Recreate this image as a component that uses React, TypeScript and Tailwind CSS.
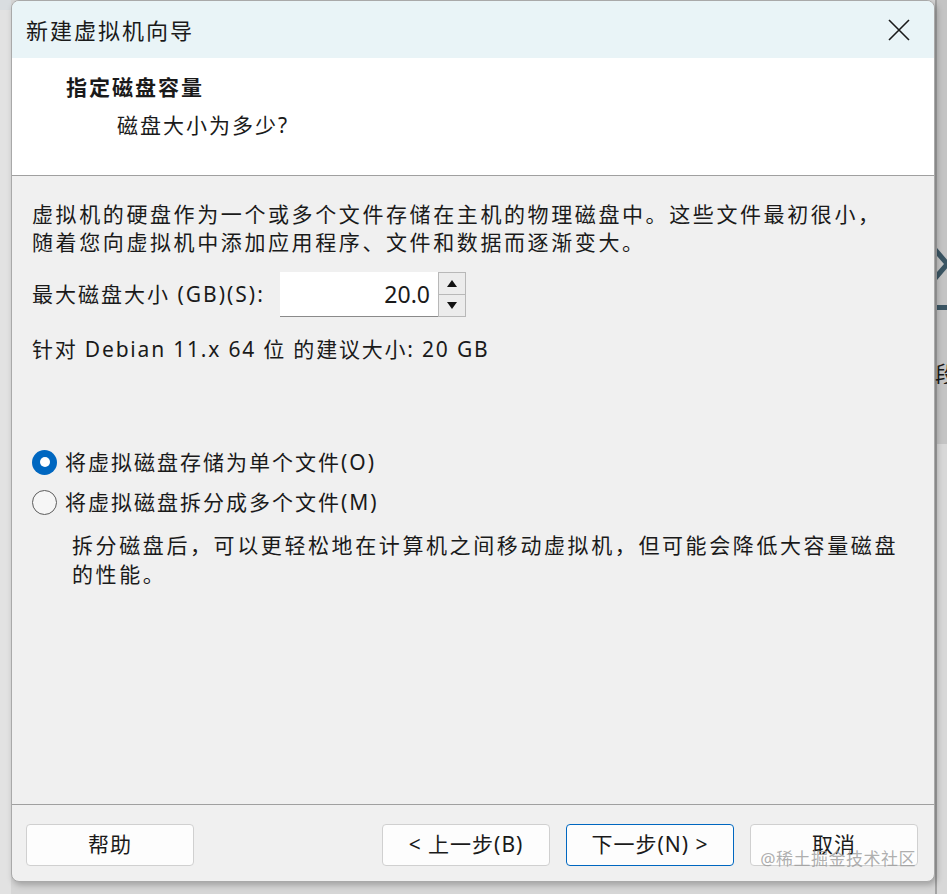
export default function App() {
  const font = { fontFamily: '"Noto Sans", "Noto Sans CJK SC", sans-serif' };
  return (
    <div className="w-[947px] h-[894px] bg-[#d6d6d6] flex overflow-hidden text-[#1a1a1a]" style={font}>
      <div className="w-[11px] shrink-0 bg-[#e2e2e2] border-t-[10px] border-[#d9dde0]" />
      <div className="w-[924px] h-[882px] shrink-0 flex flex-col rounded-[8px] overflow-hidden border border-[#a9a9a9] bg-[#f0f0f0] shadow-[2px_3px_6px_rgba(0,0,0,0.25)] relative">
        {/* title bar */}
        <div className="h-[57px] shrink-0 bg-[#e9f4f7] flex items-center justify-between pl-[14px] pr-[20px]">
          <span className="text-[22px] tracking-[2px] leading-none">新建虚拟机向导</span>
          <svg width="24" height="24" viewBox="0 0 24 24" className="mr-[3px]">
            <path d="M2 2 L22 22 M22 2 L2 22" stroke="#1a1a1a" strokeWidth="1.6" fill="none" />
          </svg>
        </div>

        {/* header */}
        <div className="h-[118px] shrink-0 bg-white border-b border-[#a0a0a0] pl-[54px] pt-[14px]">
          <div className="text-[21px] font-bold tracking-[2px] leading-[30px]">指定磁盘容量</div>
          <div className="text-[21px] tracking-[2px] leading-[30px] mt-[8px] pl-[51px]">磁盘大小为多少?</div>
        </div>

        {/* body */}
        <div className="flex-1 flex flex-col pl-[20px] pt-[24px]">
          <div className="text-[21px] tracking-[2.6px] leading-[28px]">
            <div>虚拟机的硬盘作为一个或多个文件存储在主机的物理磁盘中。这些文件最初很小，</div>
            <div>随着您向虚拟机中添加应用程序、文件和数据而逐渐变大。</div>
          </div>

          <div className="flex items-center mt-[16px] h-[45px]">
            <span className="text-[21px] tracking-[2px] w-[248px]">最大磁盘大小 (GB)(S):</span>
            <div className="w-[158px] h-[45px] bg-white border-b border-[#8a8a8a] flex items-center justify-end pr-[8px] text-[23px]">
              20.0
            </div>
            <div className="w-[28px] h-[45px] flex flex-col border border-[#b8b8b8]">
              <div className="flex-1 bg-[#ececec] border-b border-[#b8b8b8] flex items-center justify-center">
                <svg width="10" height="7" viewBox="0 0 10 7"><path d="M5 0 L10 7 L0 7 Z" fill="#111" /></svg>
              </div>
              <div className="flex-1 bg-[#ececec] flex items-center justify-center">
                <svg width="10" height="7" viewBox="0 0 10 7"><path d="M0 0 L10 0 L5 7 Z" fill="#111" /></svg>
              </div>
            </div>
          </div>

          <div className="text-[21px] tracking-[1.8px] leading-[28px] mt-[18px]">
            针对 Debian 11.x 64 位 的建议大小: 20 GB
          </div>

          <div className="flex flex-col gap-[14px] mt-[86px] text-[21px] tracking-[2px] leading-[26px]">
            <label className="flex items-center gap-[8px]">
              <span className="w-[25px] h-[25px] rounded-full bg-[#0067c0] flex items-center justify-center">
                <span className="w-[10px] h-[10px] rounded-full bg-white" />
              </span>
              <span>将虚拟磁盘存储为单个文件(O)</span>
            </label>
            <label className="flex items-center gap-[8px]">
              <span className="w-[25px] h-[25px] rounded-full border-[1.5px] border-[#5c5c5c] bg-[#f6f6f6]" />
              <span>将虚拟磁盘拆分成多个文件(M)</span>
            </label>
          </div>

          <div className="pl-[40px] mt-[16px] text-[21px] tracking-[2.6px] leading-[29px]">
            <div>拆分磁盘后，可以更轻松地在计算机之间移动虚拟机，但可能会降低大容量磁盘</div>
            <div>的性能。</div>
          </div>
        </div>

        {/* footer */}
        <div className="h-[77px] shrink-0 border-t border-[#a0a0a0] flex items-start pt-[19px] pl-[14px] pr-[16px]">
          <button className="w-[168px] h-[42px] rounded-[4px] border border-[#d0d0d0] bg-[#fdfdfd] text-[21px] tracking-[1px]">帮助</button>
          <div className="flex-1" />
          <div className="flex gap-[16px]">
            <button className="w-[168px] h-[42px] rounded-[4px] border border-[#d0d0d0] bg-[#fdfdfd] text-[21px] tracking-[1px]">&lt; 上一步(B)</button>
            <button className="w-[168px] h-[42px] rounded-[4px] border border-[#0067c0] bg-[#fdfdfd] text-[21px] tracking-[1px]">下一步(N) &gt;</button>
            <button className="w-[168px] h-[42px] rounded-[4px] border border-[#d0d0d0] bg-[#fdfdfd] text-[21px] tracking-[1px]">取消</button>
          </div>
          <span className="absolute right-[18px] bottom-[10px] text-[17px] text-[#9a9a9a]/80 tracking-[0.5px]">@稀土掘金技术社区</span>
        </div>
      </div>

      {/* window behind, right edge */}
      <div className="flex-1 flex flex-col bg-[#c4c4c4] border-l-2 border-[#a4a4a4]">
        <div className="h-[248px]" />
        <svg width="12" height="32" viewBox="0 0 12 32">
          <path d="M0 0 L12 14 L12 18 L0 32 L0 24 L7 16 L0 8 Z" fill="#3b5563" />
        </svg>
        <div className="h-[25px]" />
        <div className="h-[5px] bg-[#3b5563]" />
        <div className="h-[52px]" />
        <div className="text-[22px] leading-none -ml-[2px] overflow-hidden">段</div>
        <div className="h-[60px]" />
        <div className="flex-1 bg-[#d8d8d8]" />
      </div>
    </div>
  );
}
